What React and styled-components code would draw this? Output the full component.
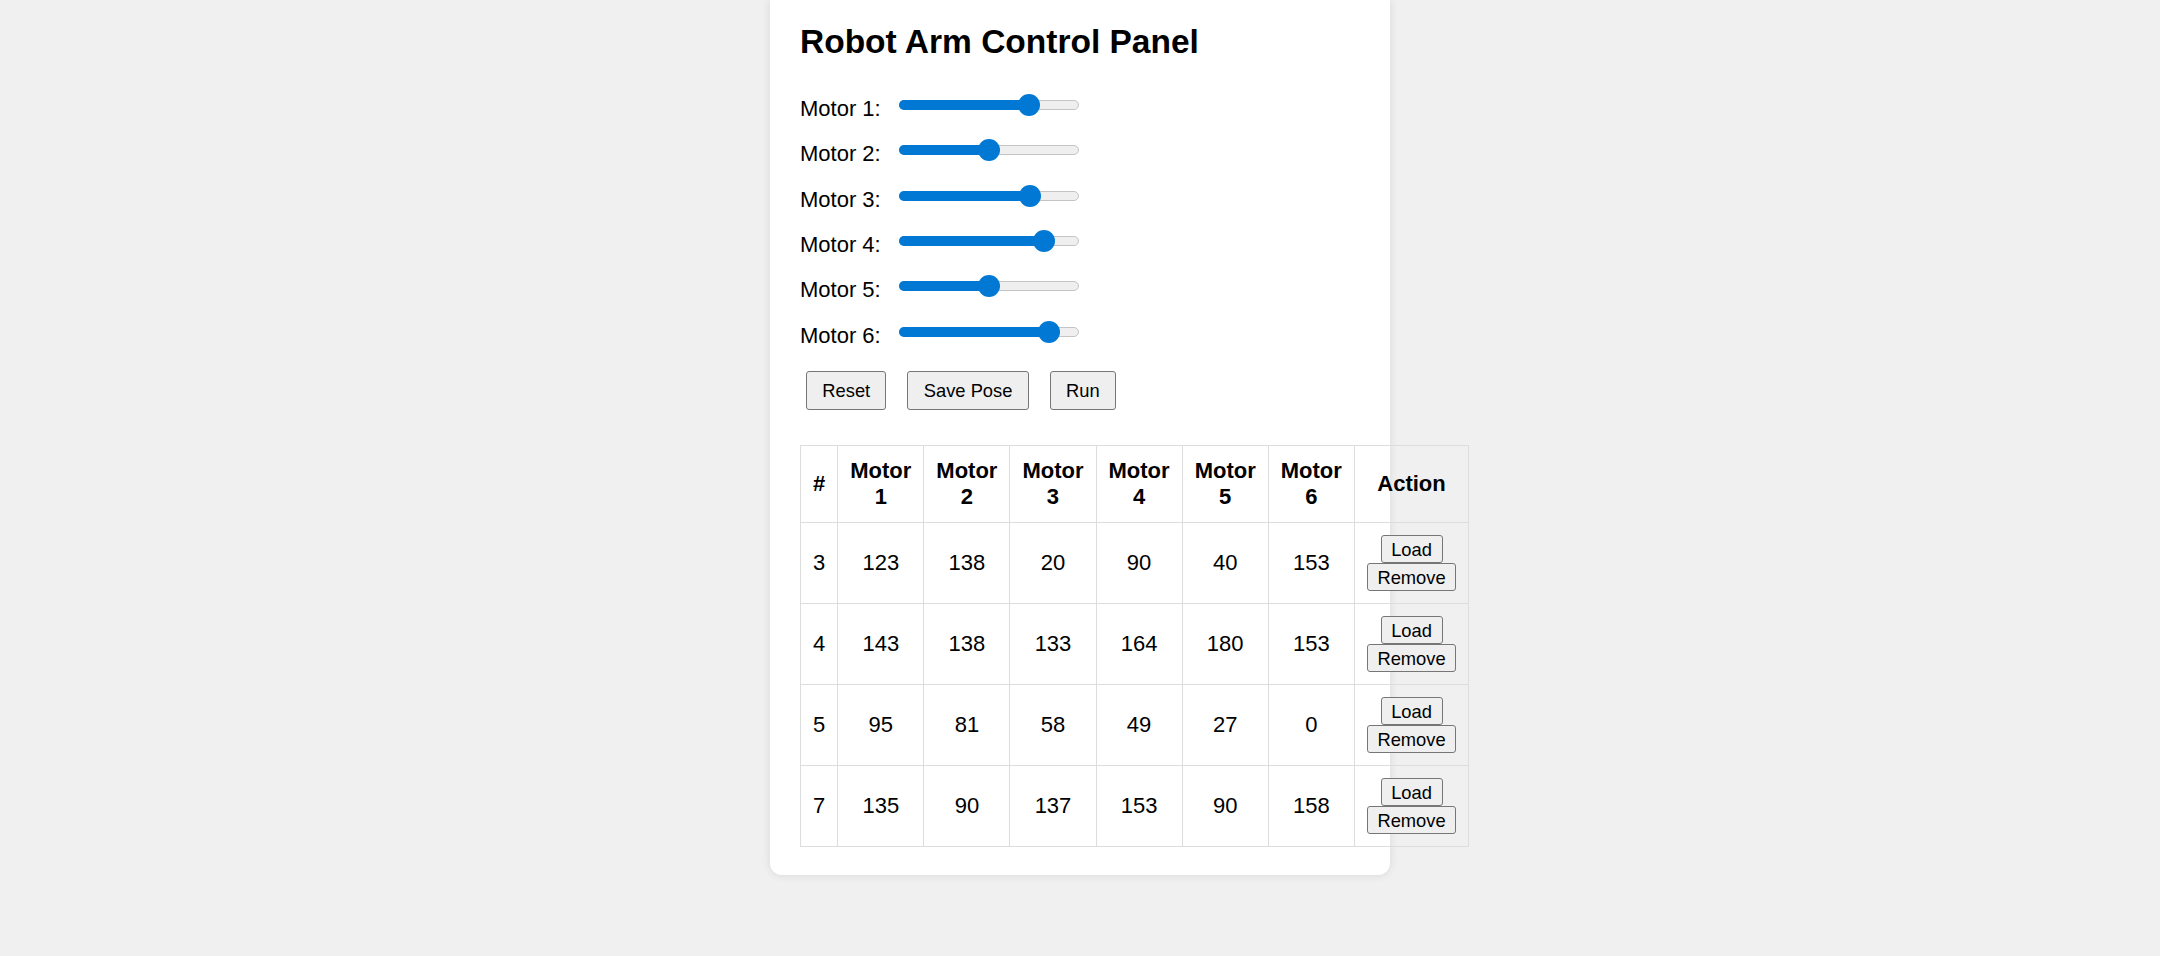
import React from "react";
import styled, { createGlobalStyle } from "styled-components";

const GlobalStyle = createGlobalStyle`
  html, body {
    margin: 0;
    padding: 0;
    background: #f0f0f0;
    font-family: "Liberation Sans", Arial, sans-serif;
    color: #000;
  }
`;

const Page = styled.div`
  display: flex;
  justify-content: center;
  padding-bottom: 40px;
`;

const Card = styled.div`
  width: 620px;
  box-sizing: border-box;
  background: #fff;
  padding: 23px 30px 28px;
  border-radius: 0 0 12px 12px;
  box-shadow: 0 0 10px rgba(0, 0, 0, 0.1);
`;

const Title = styled.h2`
  margin: 0;
  font-size: 33.5px;
  font-weight: bold;
  line-height: normal;
`;

const SliderList = styled.div`
  display: flex;
  flex-direction: column;
  gap: 23.33px;
  margin-top: 33px;
`;

const SliderRow = styled.div`
  display: flex;
  align-items: center;
  height: 22px;
`;

const Label = styled.label`
  flex: 0 0 99px;
  font-size: 22px;
  line-height: normal;
  margin-top: 8px;
`;

const Track = styled.div`
  position: relative;
  width: 180px;
  height: 10px;
  box-sizing: border-box;
  background: #efefef;
  border: 1px solid #c4c4c4;
  border-radius: 5px;
`;

const Fill = styled.div`
  position: absolute;
  left: -1px;
  top: -1px;
  height: 10px;
  background: #0078d4;
  border-radius: 5px;
`;

const Thumb = styled.div`
  position: absolute;
  top: 50%;
  width: 22px;
  height: 22px;
  border-radius: 50%;
  background: #0078d4;
  transform: translate(-50%, -50%);
`;

const ButtonBar = styled.div`
  display: flex;
  gap: 21px;
  padding-left: 6px;
  margin-top: 28px;
`;

const Button = styled.button`
  font-family: "Liberation Sans", Arial, sans-serif;
  font-size: 18.33px;
  line-height: normal;
  color: #000;
  background: #efefef;
  border: 1px solid #767676;
  border-radius: 3px;
  padding: ${(p) => (p.$small ? "2.7px 9.6px" : "8.2px 15.3px")};
  height: ${(p) => (p.$small ? "28px" : "39.4px")};
  box-sizing: border-box;
  cursor: pointer;
`;

const Table = styled.table`
  width: 100%;
  margin-top: 35.3px;
  border-collapse: collapse;
  border: 1px solid #ddd;
  font-size: 22px;
`;

const Th = styled.th`
  border: 1px solid #ddd;
  padding: 12px;
  font-weight: bold;
  text-align: center;
  line-height: normal;
`;

const Td = styled.td`
  border: 1px solid #ddd;
  padding: 12px;
  text-align: center;
  line-height: normal;
`;

const ActionStack = styled.div`
  display: flex;
  flex-direction: column;
  align-items: center;
`;

const motors = [135, 90, 137, 153, 90, 158];

const poses = [
  { id: 3, values: [123, 138, 20, 90, 40, 153] },
  { id: 4, values: [143, 138, 133, 164, 180, 153] },
  { id: 5, values: [95, 81, 58, 49, 27, 0] },
  { id: 7, values: [135, 90, 137, 153, 90, 158] },
];

function Slider({ value, max = 180 }) {
  const center = 11 + (value / max) * (180 - 22);
  return (
    <Track>
      <Fill style={{ width: `${center}px` }} />
      <Thumb style={{ left: `${center - 1}px` }} />
    </Track>
  );
}

export default function App() {
  return (
    <>
      <GlobalStyle />
      <Page>
        <Card>
          <Title>Robot Arm Control Panel</Title>
          <SliderList>
            {motors.map((v, i) => (
              <SliderRow key={i}>
                <Label>Motor {i + 1}:</Label>
                <Slider value={v} />
              </SliderRow>
            ))}
          </SliderList>
          <ButtonBar>
            <Button>Reset</Button>
            <Button>Save Pose</Button>
            <Button>Run</Button>
          </ButtonBar>
          <Table>
            <thead>
              <tr>
                <Th>#</Th>
                {[1, 2, 3, 4, 5, 6].map((n) => (
                  <Th key={n}>Motor {n}</Th>
                ))}
                <Th>Action</Th>
              </tr>
            </thead>
            <tbody>
              {poses.map((p) => (
                <tr key={p.id}>
                  <Td>{p.id}</Td>
                  {p.values.map((v, i) => (
                    <Td key={i}>{v}</Td>
                  ))}
                  <Td>
                    <ActionStack>
                      <Button $small>Load</Button>
                      <Button $small>Remove</Button>
                    </ActionStack>
                  </Td>
                </tr>
              ))}
            </tbody>
          </Table>
        </Card>
      </Page>
    </>
  );
}
